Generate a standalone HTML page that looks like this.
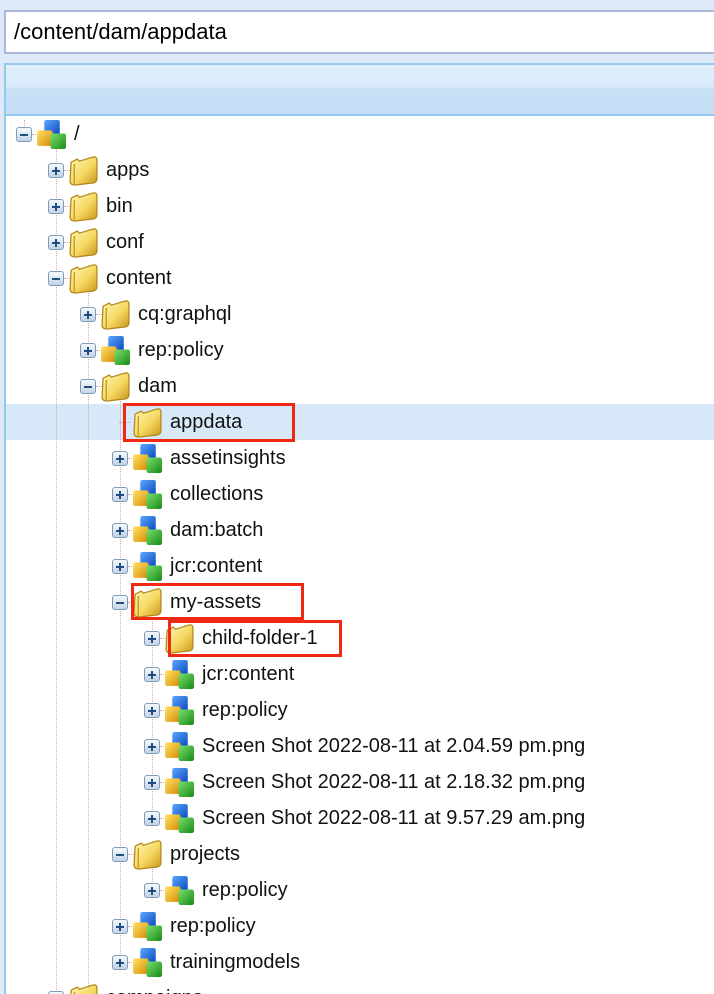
<!DOCTYPE html>
<html><head><meta charset="utf-8"><style>
*{margin:0;padding:0;box-sizing:border-box}
html,body{width:714px;height:994px;overflow:hidden}
body{background:#dde9f6;position:relative;font-family:"Liberation Sans",Arial,sans-serif}
#inp{position:absolute;left:4px;top:10px;width:720px;height:44px;background:#fff;border:2px solid #a9b7d8;font-size:22px;line-height:40px;padding-left:8px;color:#000}
#panel{position:absolute;left:4px;top:63px;width:720px;height:1000px;border:2px solid #94c8ee;background:#fff}
#hdr{position:absolute;left:0;top:0;right:0;height:51px;background:linear-gradient(#e3f0fc 0,#d6e9fa 23px,#c7e0f6 24px,#c5def5 100%);border-bottom:2px solid #94c8ee}
.r{position:absolute;left:0;right:0;height:36px}
.t{position:absolute;top:11px;width:16px;height:15px;border:1px solid #7e9bb8;border-radius:3px;background:linear-gradient(#f6f9fc,#c3d3e4)}
.t:before{content:"";position:absolute;left:3px;top:5.5px;width:8px;height:2px;background:#1f4e86}
.t.p:after{content:"";position:absolute;left:6px;top:2.5px;width:2px;height:8px;background:#1f4e86}
.h{position:absolute;top:18px;width:6px;border-top:1px dotted #d9a8a8}
.i{position:absolute;top:3px;width:31px;height:31px}
.x{position:absolute;top:5px;font-size:20px;line-height:26px;color:#111;white-space:nowrap}
.v{position:absolute;width:0;border-left:1px dotted #d9a8a8}
.box{position:absolute;border:3px solid #f02a12}
</style></head><body>
<svg width="0" height="0" style="position:absolute"><defs>
<linearGradient id="fy" x1="0" y1="0" x2="1" y2="1"><stop offset="0" stop-color="#fff8b8"/><stop offset=".55" stop-color="#f5d860"/><stop offset="1" stop-color="#c89418"/></linearGradient>
<linearGradient id="cb" x1="0" y1="0" x2="1" y2="1"><stop offset="0" stop-color="#5aa8ff"/><stop offset="1" stop-color="#0a45c0"/></linearGradient>
<linearGradient id="cy" x1="0" y1="0" x2="1" y2="1"><stop offset="0" stop-color="#ffe36a"/><stop offset="1" stop-color="#d68a00"/></linearGradient>
<linearGradient id="cg" x1="0" y1="0" x2="1" y2="1"><stop offset="0" stop-color="#7ee06a"/><stop offset="1" stop-color="#158a18"/></linearGradient>
<symbol id="fo" viewBox="0 0 30 30"><path d="M3 7 L9 4 L11 6 L24 2 Q28 1 28 5 L28 23 Q28 26 25 27 L7 29 Q2 29 2 25 Z" fill="url(#fy)" stroke="#b38616" stroke-width="1.2"/><path d="M7 9 Q6 9 6 11 L6 28" stroke="#c2921e" stroke-width="1.2" fill="none"/></symbol>
<symbol id="cu" viewBox="0 0 30 30"><rect x="8" y="1" width="15" height="15" rx="2" fill="url(#cb)"/><rect x="1" y="11" width="15" height="15" rx="2" fill="url(#cy)"/><rect x="14" y="14" width="15" height="15" rx="2" fill="url(#cg)"/></symbol>
</defs></svg>
<div id="inp">/content/dam/appdata</div>
<div id="panel"><div id="hdr"></div></div>
<div style="position:absolute;left:6px;top:404px;width:710px;height:36px;background:#d7e9f8"></div>
<div class="v" style="left:24px;top:120px;height:14px"></div>
<div class="v" style="left:56px;top:134px;height:870px"></div>
<div class="v" style="left:88px;top:278px;height:720px"></div>
<div class="v" style="left:120px;top:386px;height:576px"></div>
<div class="v" style="left:152px;top:602px;height:216px"></div>
<div class="v" style="left:152px;top:854px;height:36px"></div>
<div id="tree"></div>
<script>
var rows=[[0,"/",1,0],[1,"apps",0,1],[1,"bin",0,1],[1,"conf",0,1],[1,"content",0,0],[2,"cq:graphql",0,1],[2,"rep:policy",1,1],[2,"dam",0,0],[3,"appdata",0,2],[3,"assetinsights",1,1],[3,"collections",1,1],[3,"dam:batch",1,1],[3,"jcr:content",1,1],[3,"my-assets",0,0],[4,"child-folder-1",0,1],[4,"jcr:content",1,1],[4,"rep:policy",1,1],[4,"Screen Shot 2022-08-11 at 2.04.59 pm.png",1,1],[4,"Screen Shot 2022-08-11 at 2.18.32 pm.png",1,1],[4,"Screen Shot 2022-08-11 at 9.57.29 am.png",1,1],[3,"projects",0,0],[4,"rep:policy",1,1],[3,"rep:policy",1,1],[3,"trainingmodels",1,1],[1,"campaigns",0,0]];
var h="";
rows.forEach(function(r,k){var L=24+32*r[0],y=116+36*k;
h+='<div class="r" style="top:'+y+'px">';
if(r[3]<2)h+='<div class="t'+(r[3]?' p':'')+'" style="left:'+(L-8)+'px"></div><div class="h" style="left:'+(L+8)+'px"></div>';
else h+='<div class="h" style="left:'+(L-1)+'px;width:12px"></div>';
h+='<svg class="i" style="left:'+(L+12)+'px"><use href="#'+(r[2]?'cu':'fo')+'"/></svg>';
h+='<div class="x" style="left:'+(L+50)+'px">'+r[1]+'</div></div>';});
document.getElementById("tree").innerHTML=h;
</script>
<div class="box" style="left:123px;top:403px;width:172px;height:39px"></div>
<div class="box" style="left:131px;top:583px;width:173px;height:37px"></div>
<div class="box" style="left:168px;top:620px;width:174px;height:37px"></div>
</body></html>
